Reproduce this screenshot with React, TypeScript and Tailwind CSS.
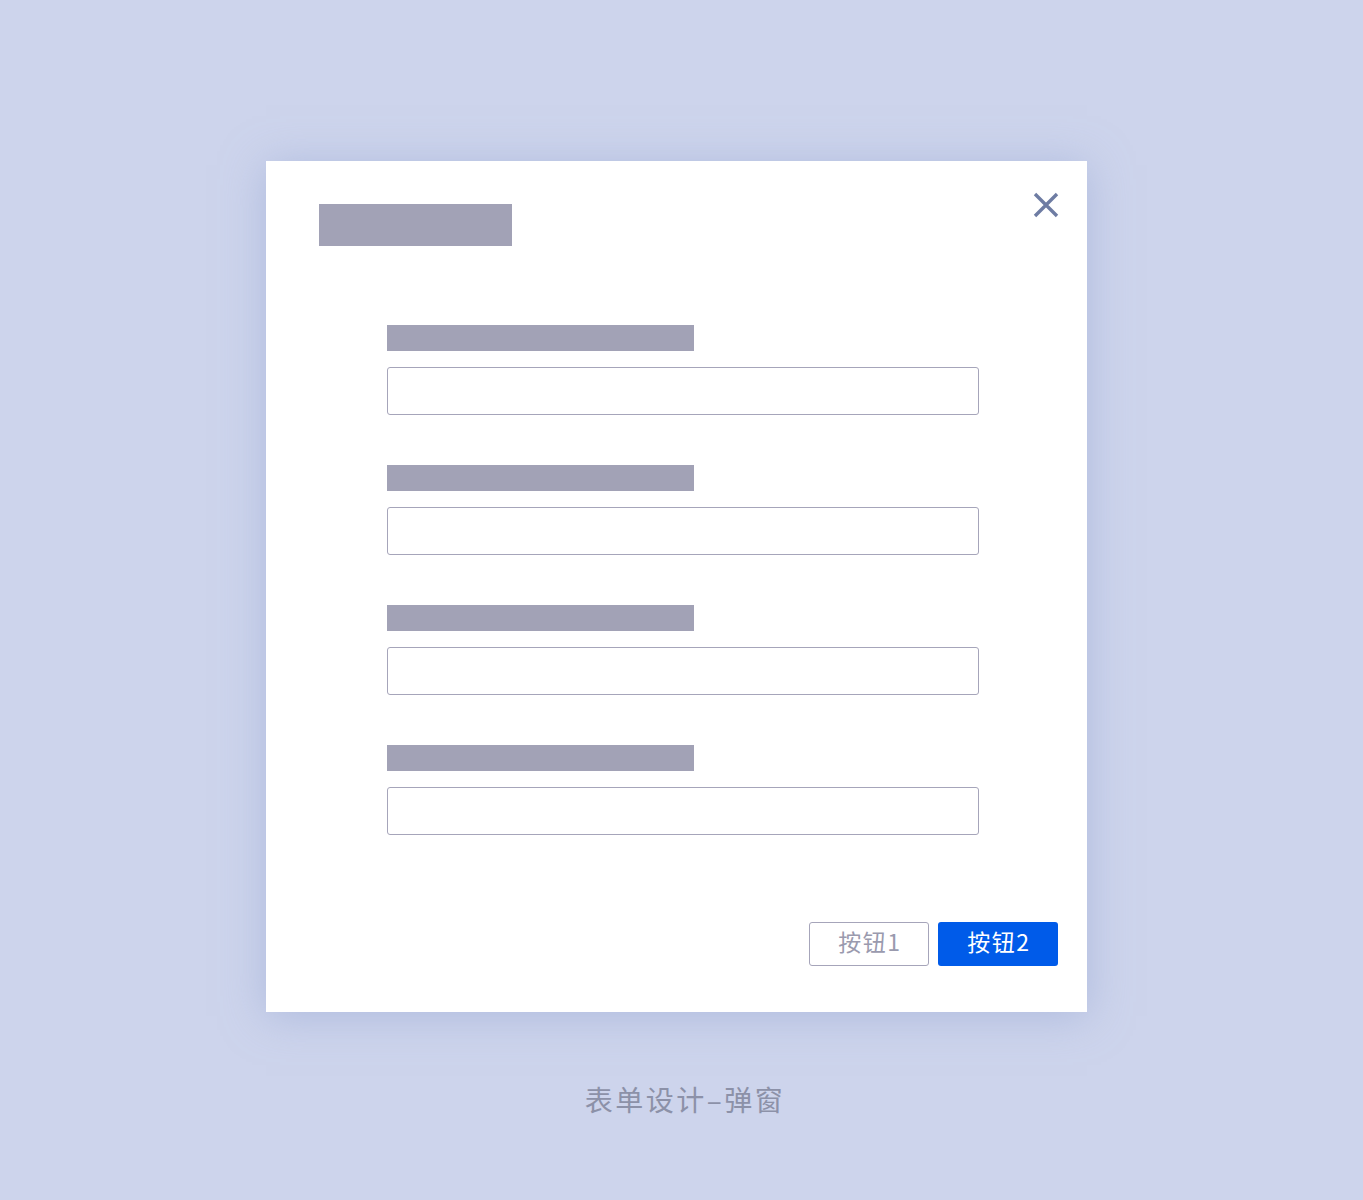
const fields = [0, 1, 2, 3]

const CloseIcon = () => (
  <svg width="26" height="26" viewBox="0 0 26 26" fill="none">
    <path d="M2 2L24 24M24 2L2 24" stroke="#6e7ca3" strokeWidth="3.4" strokeLinecap="butt" />
  </svg>
)

const FormField = () => (
  <div className="flex flex-col gap-4">
    <div className="h-[26px] w-[307px] bg-[#a2a2b6]" />
    <input className="h-12 w-[592px] rounded-[3px] border border-[#a6a5ba] bg-white outline-none" />
  </div>
)

export default function App() {
  return (
    <div className="min-h-[1200px] bg-[#cdd4ec] pt-[161px] font-['Noto_Sans_CJK_SC',sans-serif]">
      <div className="relative ml-[266px] h-[851px] w-[821px] bg-white shadow-[0_4px_40px_rgba(150,165,210,0.55)]">
        <button className="absolute right-[28px] top-[31px]">
          <CloseIcon />
        </button>
        <div className="pl-[53px] pt-[43px]">
          <div className="h-[42px] w-[193px] bg-[#a2a2b6]" />
        </div>
        <div className="mt-[79px] flex flex-col gap-[50px] pl-[121px]">
          {fields.map((f) => (
            <FormField key={f} />
          ))}
        </div>
        <div className="mt-[87px] flex justify-end gap-[9px] pr-[29px]">
          <button className="flex h-11 w-[120px] items-center justify-center rounded-[3px] border border-[#a6a5ba] bg-white pb-[5px] pl-[2px] text-[23px] tracking-[1.5px] text-[#9a9aae]">
            按钮1
          </button>
          <button className="flex h-11 w-[120px] items-center justify-center rounded-[3px] bg-[#005be9] pb-[5px] pl-[2px] text-[23px] tracking-[1.5px] text-white">
            按钮2
          </button>
        </div>
      </div>
      <div className="mt-[67px] pl-[7px] text-center text-[28px] leading-[40px] tracking-[2.5px] text-[#8c91a8]">
        表单设计–弹窗
      </div>
    </div>
  )
}
